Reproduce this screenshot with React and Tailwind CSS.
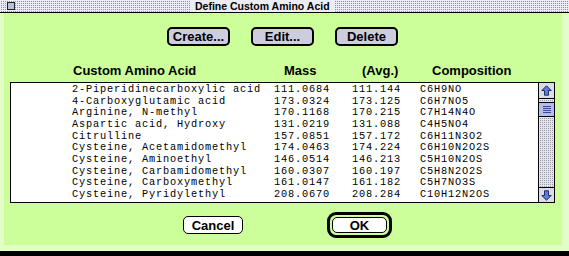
import React from "react"

const rows = [
  ["2-Piperidinecarboxylic acid", "111.0684", "111.144", "C6H9NO"],
  ["4-Carboxyglutamic acid", "173.0324", "173.125", "C6H7NO5"],
  ["Arginine, N-methyl", "170.1168", "170.215", "C7H14N4O"],
  ["Aspartic acid, Hydroxy", "131.0219", "131.088", "C4H5NO4"],
  ["Citrulline", "157.0851", "157.172", "C6H11N3O2"],
  ["Cysteine, Acetamidomethyl", "174.0463", "174.224", "C6H10N2O2S"],
  ["Cysteine, Aminoethyl", "146.0514", "146.213", "C5H10N2OS"],
  ["Cysteine, Carbamidomethyl", "160.0307", "160.197", "C5H8N2O2S"],
  ["Cysteine, Carboxymethyl", "161.0147", "161.182", "C5H7NO3S"],
  ["Cysteine, Pyridylethyl", "208.0670", "208.284", "C10H12N2OS"],
]

function Arrow({ down }) {
  return (
    <svg width="11" height="11" viewBox="0 0 11 11" className={down ? "rotate-180" : ""}>
      <path d="M5.5 0.8 L10.2 5.5 H7.5 V10.2 H3.5 V5.5 H0.8 Z" fill="#5b7fd6" stroke="#1c2c66" strokeWidth="1" />
    </svg>
  )
}

function MacButton({ children }) {
  return (
    <div className="flex h-[19px] w-[63px] items-center justify-center rounded-[5px] border-2 border-black bg-[#cdcde0] text-[13px] font-bold leading-none text-black">
      {children}
    </div>
  )
}

export default function App() {
  return (
    <div className="flex h-[256px] w-[569px] flex-col overflow-hidden bg-[#ccff99] font-['Liberation_Sans',Arial,sans-serif]">
      {/* title bar */}
      <div className="flex h-[13px] items-center border-b border-black bg-[#ececf4] bg-[conic-gradient(from_90deg_at_1px_1px,#8f8fa8_90deg,#ececf4_0)] bg-[length:2px_2px] pl-[7px]">
        <div className="h-[8px] w-[8px] border border-[#222] bg-[#b8c0e0]" />
        <div className="ml-[175px] bg-[#ececf4] px-[5px] text-[10.5px] font-bold leading-[12px] text-black">
          Define Custom Amino Acid
        </div>
      </div>

      {/* body */}
      <div className="flex flex-1 flex-col shadow-[inset_4px_0_0_#e2ffc8,inset_-7px_0_0_#e2ffc8]">
        <div className="flex gap-[21px] pl-[167px] pt-[14px]">
          <MacButton>Create...</MacButton>
          <MacButton>Edit...</MacButton>
          <MacButton>Delete</MacButton>
        </div>

        <div className="mt-[17px] flex pl-[73px] text-[13px] font-bold leading-[15px] text-black">
          <div className="w-[211px]">Custom Amino Acid</div>
          <div className="w-[78px]">Mass</div>
          <div className="w-[70px]">(Avg.)</div>
          <div>Composition</div>
        </div>

        <div className="ml-[10px] mt-[4px] flex h-[121px] w-[545px] border border-black bg-white">
          <div className="flex-1 pt-[1px] font-['Liberation_Mono','Courier_New',monospace] text-[10.3px] leading-[11.67px] tracking-[0.82px] text-black">
            {rows.map((r) => (
              <div key={r[0]} className="flex whitespace-pre pl-[61px]">
                <div className="w-[202px]">{r[0]}</div>
                <div className="w-[78px]">{r[1]}</div>
                <div className="w-[68px]">{r[2]}</div>
                <div>{r[3]}</div>
              </div>
            ))}
          </div>
          {/* scrollbar */}
          <div className="flex w-[16px] flex-col border-l border-black">
            <div className="flex h-[16px] items-center justify-center border-b border-black bg-[#dcdce8]">
              <Arrow />
            </div>
            <div className="flex flex-1 flex-col bg-[#d0d0d8] bg-[conic-gradient(from_90deg_at_1px_1px,#9a9aa8_90deg,#e4e4ec_0)] bg-[length:2px_2px] pt-[3px]">
              <div className="flex h-[15px] flex-col items-center justify-center gap-[1px] border-y border-black bg-[#b4bce8]">
                <div className="h-[1px] w-[8px] bg-[#3a4a90]" />
                <div className="h-[1px] w-[8px] bg-[#3a4a90]" />
                <div className="h-[1px] w-[8px] bg-[#3a4a90]" />
                <div className="h-[1px] w-[8px] bg-[#3a4a90]" />
              </div>
            </div>
            <div className="flex h-[15px] items-center justify-center border-t border-black bg-[#dcdce8]">
              <Arrow down />
            </div>
          </div>
        </div>

        <div className="mt-[9px] flex items-center pl-[183px]">
          <div className="flex h-[18px] w-[60px] items-center justify-center rounded-[5px] border border-black bg-white text-[13px] font-bold leading-none">
            Cancel
          </div>
          <div className="ml-[84px] rounded-[9px] border-[3px] border-black p-[2px]">
            <div className="flex h-[16px] w-[55px] items-center justify-center rounded-[5px] border border-black bg-white text-[13px] font-bold leading-none">
              OK
            </div>
          </div>
        </div>

        <div className="mt-auto h-[6px] bg-[#e2ffc8]" />
        <div className="h-[5px] bg-black" />
      </div>
    </div>
  )
}
